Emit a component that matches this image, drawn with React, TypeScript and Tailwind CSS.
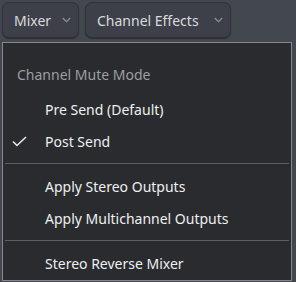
import React from 'react';

const font = { fontFamily: '"Noto Sans", "Open Sans", sans-serif' };

const Chevron: React.FC = () => (
  <svg width="9" height="6" viewBox="0 0 9 6" className="text-[#8c8f96]">
    <path d="M0.8 1l3.7 3.7 3.7-3.7" fill="none" stroke="currentColor" strokeWidth="1.3" />
  </svg>
);

const TopButton: React.FC<{ label: string; width: string }> = ({ label, width }) => (
  <div
    className={`flex h-[36px] ${width} items-center justify-between rounded-[7px] border border-[#2f3238] bg-[#3d4048] pl-[11px] pr-[7px] text-[14px] text-[#d9dadd] shadow-[0_1px_1px_rgba(0,0,0,0.35)]`}
  >
    <span>{label}</span>
    <Chevron />
  </div>
);

const Item: React.FC<{ label: string; checked?: boolean }> = ({ label, checked }) => (
  <div className="flex h-[32px] items-center text-[14px] text-[#eeeff0]">
    <div className="flex w-[42px] items-center pl-[9px]">
      {checked && (
        <svg width="15" height="11" viewBox="0 0 15 11">
          <path d="M1 5.5l4 4 9-8.5" fill="none" stroke="#e8e9eb" strokeWidth="1.6" />
        </svg>
      )}
    </div>
    <span>{label}</span>
  </div>
);

const Separator: React.FC = () => <div className="mx-[2px] my-[6px] h-px bg-[#5c5e63]" />;

export default function App() {
  return (
    <div className="h-[282px] w-[296px] overflow-hidden bg-[#43474e]" style={font}>
      <div className="flex h-[42px] items-start gap-[6px] px-[2px] pt-[2px]">
        <TopButton label="Mixer" width="w-[77px]" />
        <TopButton label="Channel Effects" width="w-[146px]" />
      </div>
      <div className="ml-[2px] h-[239px] w-[290px] border border-[#85878c] bg-[#2a2b2f] pt-[15px]">
        <div className="mb-[3px] flex h-[32px] items-center pl-[14px] text-[14px] text-[#9c9ea3]">
          Channel Mute Mode
        </div>
        <Item label="Pre Send (Default)" />
        <Item label="Post Send" checked />
        <Separator />
        <Item label="Apply Stereo Outputs" />
        <Item label="Apply Multichannel Outputs" />
        <Separator />
        <Item label="Stereo Reverse Mixer" />
      </div>
    </div>
  );
}
